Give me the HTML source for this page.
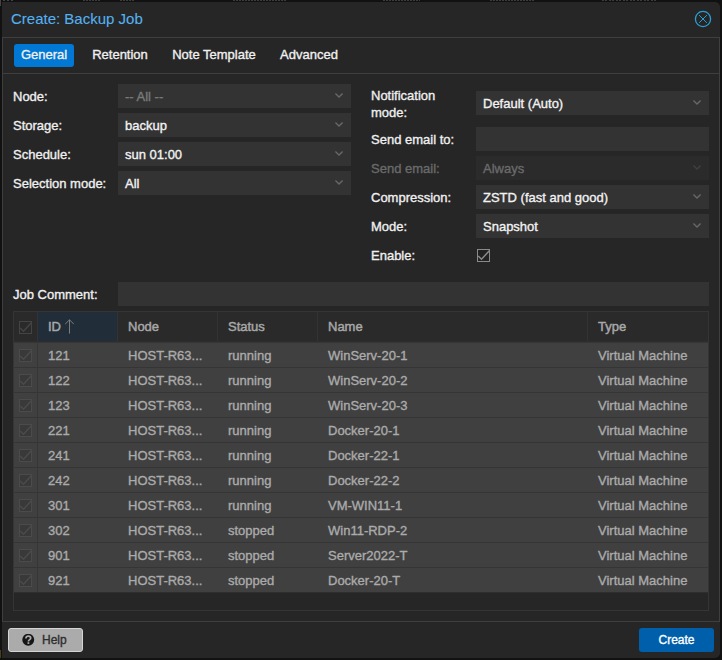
<!DOCTYPE html><html><head><meta charset="utf-8"><style>
*{box-sizing:border-box;margin:0;padding:0}
html,body{width:722px;height:660px;overflow:hidden;background:#111;font-family:"Liberation Sans",sans-serif;font-size:13px;-webkit-text-stroke:0.35px currentColor}
.a{position:absolute}
#win{position:absolute;left:2px;top:2px;width:718px;height:656px;background:#262626;border-radius:0 5px 5px 0}
.title{position:absolute;left:11px;top:10px;font-size:15px;color:#55b1f0;-webkit-text-stroke:0.1px #55b1f0;line-height:18px;white-space:nowrap}
.close{position:absolute;left:694px;top:10px}
.panel{position:absolute;left:2px;top:37px;width:718px;height:585px;border:1px solid #3f3f3f}
.tabline{position:absolute;left:2px;top:73px;width:718px;height:1px;background:#3f3f3f}
.tab{position:absolute;top:44px;height:23px;line-height:22px;color:#f0f0f0;white-space:nowrap;text-align:center}
.tab.act{background:#0078d4;border-radius:3px}
.lbl{position:absolute;color:#f0f0f0;white-space:nowrap;line-height:15px}
.lbl.dis{color:#6a6a6a}
.fld{position:absolute;height:24px;background:#333;color:#f2f2f2;line-height:24px;white-space:nowrap}
.fld span{position:absolute;left:7px;top:1px}
.fld.dis span{color:#7a7a7a}
.fld.dis2{background:#2b2b2b}
.fld.dis2 span{color:#6a6a6a}
.fld.dis2 path{stroke:#404040}
.fld .chev{position:absolute;right:7px;top:9px}
.cb{position:absolute}
.gbox{position:absolute;border:1px solid #353535;background:#262626}
.hc{position:absolute;height:29px;line-height:29px;color:#a8a8a8;white-space:nowrap;-webkit-text-stroke:0.45px #a8a8a8}
.row{position:absolute;left:14px;width:694px;height:25px;background:#404040;border-top:1px solid #353535}
.cell{position:absolute;height:24px;line-height:25px;color:#ababab;white-space:nowrap}
.btn{position:absolute;top:628px;height:24px;line-height:22px;border-radius:3px;text-align:center;white-space:nowrap;font-size:12px}
</style></head><body>
<div id="win"></div>
<div class="a" style="left:0;top:0;width:1px;height:6px;background:#444"></div>
<div class="a" style="left:0;top:650px;width:1px;height:8px;background:#4a3f1c"></div>
<div class="a" style="left:3px;top:0;width:10px;height:1px;background:repeating-linear-gradient(90deg,#444 0 2px,transparent 2px 4px)"></div>
<div class="a" style="left:83px;top:0;width:17px;height:1px;background:repeating-linear-gradient(90deg,#3c3c3c 0 2px,transparent 2px 3px)"></div>
<div class="a" style="left:120px;top:0;width:15px;height:1px;background:repeating-linear-gradient(90deg,#3c3c3c 0 2px,transparent 2px 3px)"></div>
<div class="a" style="left:233px;top:0;width:53px;height:1px;background:repeating-linear-gradient(90deg,#3c3c3c 0 2px,transparent 2px 3px)"></div>
<div class="a" style="left:383px;top:0;width:37px;height:1px;background:repeating-linear-gradient(90deg,#3c3c3c 0 2px,transparent 2px 3px)"></div>
<div class="a" style="left:490px;top:0;width:45px;height:1px;background:repeating-linear-gradient(90deg,#3c3c3c 0 2px,transparent 2px 3px)"></div>
<div class="a" style="left:602px;top:0;width:56px;height:1px;background:repeating-linear-gradient(90deg,#3c3c3c 0 2px,transparent 2px 3.5px)"></div>
<div class="title">Create: Backup Job</div>
<svg class="close" width="18" height="18" viewBox="0 0 18 18"><circle cx="9" cy="9" r="7.6" fill="none" stroke="#2a9fd6" stroke-width="1.3"/><path d="M5.1 5.1 L12.9 12.9 M12.9 5.1 L5.1 12.9" stroke="#2a9fd6" stroke-width="1"/></svg>
<div class="panel"></div>
<div class="tabline"></div>
<div class="tab act" style="left:14px;width:60px">General</div>
<div class="tab" style="left:82px;width:76px">Retention</div>
<div class="tab" style="left:164px;width:100px">Note Template</div>
<div class="tab" style="left:272px;width:74px">Advanced</div>

<div class="lbl" style="left:13px;top:89px">Node:</div>
<div class="lbl" style="left:13px;top:118px">Storage:</div>
<div class="lbl" style="left:13px;top:147px">Schedule:</div>
<div class="lbl" style="left:13px;top:176px">Selection mode:</div>
<div class="fld dis" style="left:118px;top:84px;width:233px"><span>-- All --</span><svg class="chev" width="9" height="6" viewBox="0 0 9 6"><path d="M0.4 0.5 L4 4 L7.6 0.5" fill="none" stroke="#686868" stroke-width="1.4"/></svg></div>
<div class="fld " style="left:118px;top:113px;width:233px"><span>backup</span><svg class="chev" width="9" height="6" viewBox="0 0 9 6"><path d="M0.4 0.5 L4 4 L7.6 0.5" fill="none" stroke="#686868" stroke-width="1.4"/></svg></div>
<div class="fld " style="left:118px;top:142px;width:233px"><span>sun 01:00</span><svg class="chev" width="9" height="6" viewBox="0 0 9 6"><path d="M0.4 0.5 L4 4 L7.6 0.5" fill="none" stroke="#686868" stroke-width="1.4"/></svg></div>
<div class="fld " style="left:118px;top:171px;width:233px"><span>All</span><svg class="chev" width="9" height="6" viewBox="0 0 9 6"><path d="M0.4 0.5 L4 4 L7.6 0.5" fill="none" stroke="#686868" stroke-width="1.4"/></svg></div>
<div class="lbl" style="left:371px;top:88px;line-height:16.5px">Notification<br>mode:</div>
<div class="fld " style="left:476px;top:91px;width:233px"><span>Default (Auto)</span><svg class="chev" width="9" height="6" viewBox="0 0 9 6"><path d="M0.4 0.5 L4 4 L7.6 0.5" fill="none" stroke="#686868" stroke-width="1.4"/></svg></div>
<div class="lbl" style="left:371px;top:132px">Send email to:</div>
<div class="fld " style="left:476px;top:127px;width:233px"><span></span></div>
<div class="lbl dis" style="left:371px;top:161px">Send email:</div>
<div class="fld dis dis2" style="left:476px;top:156px;width:233px"><span>Always</span><svg class="chev" width="9" height="6" viewBox="0 0 9 6"><path d="M0.4 0.5 L4 4 L7.6 0.5" fill="none" stroke="#686868" stroke-width="1.4"/></svg></div>
<div class="lbl" style="left:371px;top:190px">Compression:</div>
<div class="fld " style="left:476px;top:185px;width:233px"><span>ZSTD (fast and good)</span><svg class="chev" width="9" height="6" viewBox="0 0 9 6"><path d="M0.4 0.5 L4 4 L7.6 0.5" fill="none" stroke="#686868" stroke-width="1.4"/></svg></div>
<div class="lbl" style="left:371px;top:219px">Mode:</div>
<div class="fld " style="left:476px;top:214px;width:233px"><span>Snapshot</span><svg class="chev" width="9" height="6" viewBox="0 0 9 6"><path d="M0.4 0.5 L4 4 L7.6 0.5" fill="none" stroke="#686868" stroke-width="1.4"/></svg></div>
<div class="lbl" style="left:371px;top:248px">Enable:</div>
<svg class="cb" style="left:477px;top:249px" width="13" height="13" viewBox="0 0 13 13"><rect x="0.5" y="0.5" width="12" height="12" fill="#222" stroke="#8a8a8a" stroke-width="1"/><path d="M1.2 7 L4.5 10.2 L12.3 1.8" fill="none" stroke="#8a8a8a" stroke-width="1.5"/></svg>
<div class="lbl" style="left:13px;top:287px">Job Comment:</div>
<div class="fld " style="left:118px;top:282px;width:591px"><span></span></div>
<div class="gbox" style="left:13px;top:311px;width:696px;height:300px;"></div>
<div class="a" style="left:14px;top:312px;width:694px;height:29px;background:#2a2a2a"></div>
<div class="a" style="left:38px;top:312px;width:79px;height:29px;background:#212e39"></div>
<div class="a" style="left:37px;top:312px;width:1px;height:29px;background:#333"></div>
<div class="a" style="left:117px;top:312px;width:1px;height:29px;background:#333"></div>
<div class="a" style="left:217px;top:312px;width:1px;height:29px;background:#333"></div>
<div class="a" style="left:317px;top:312px;width:1px;height:29px;background:#333"></div>
<div class="a" style="left:587px;top:312px;width:1px;height:29px;background:#333"></div>
<div class="a" style="left:14px;top:341px;width:694px;height:1px;background:#2e2e2e"></div>
<div class="hc" style="left:48px;top:312px">ID</div>
<div class="hc" style="left:128px;top:312px">Node</div>
<div class="hc" style="left:228px;top:312px">Status</div>
<div class="hc" style="left:328px;top:312px">Name</div>
<div class="hc" style="left:598px;top:312px">Type</div>
<svg class="a" style="left:64px;top:319px" width="11" height="15" viewBox="0 0 11 15"><path d="M5.5 0.8 L5.5 14.6 M1.2 5.1 L5.5 0.8 L9.8 5.1" fill="none" stroke="#7d7d7d" stroke-width="1"/></svg>
<svg class="cb" style="left:19px;top:321px" width="13" height="13" viewBox="0 0 13 13"><rect x="0.5" y="0.5" width="12" height="12" fill="#2a2a2a" stroke="#444" stroke-width="1"/><path d="M1.2 7 L4.5 10.2 L12.3 1.8" fill="none" stroke="#444" stroke-width="1.5"/></svg>
<div class="row" style="top:342px"></div>
<svg class="cb" style="left:19px;top:349px" width="13" height="13" viewBox="0 0 13 13"><rect x="0.5" y="0.5" width="12" height="12" fill="#393939" stroke="#4b4b4b" stroke-width="1"/><path d="M1.2 7 L4.5 10.2 L12.3 1.8" fill="none" stroke="#4b4b4b" stroke-width="1.5"/></svg>
<div class="cell" style="left:48px;top:343px">121</div>
<div class="cell" style="left:128px;top:343px">HOST-R63...</div>
<div class="cell" style="left:228px;top:343px">running</div>
<div class="cell" style="left:328px;top:343px">WinServ-20-1</div>
<div class="cell" style="left:598px;top:343px">Virtual Machine</div>
<div class="row" style="top:367px"></div>
<svg class="cb" style="left:19px;top:374px" width="13" height="13" viewBox="0 0 13 13"><rect x="0.5" y="0.5" width="12" height="12" fill="#393939" stroke="#4b4b4b" stroke-width="1"/><path d="M1.2 7 L4.5 10.2 L12.3 1.8" fill="none" stroke="#4b4b4b" stroke-width="1.5"/></svg>
<div class="cell" style="left:48px;top:368px">122</div>
<div class="cell" style="left:128px;top:368px">HOST-R63...</div>
<div class="cell" style="left:228px;top:368px">running</div>
<div class="cell" style="left:328px;top:368px">WinServ-20-2</div>
<div class="cell" style="left:598px;top:368px">Virtual Machine</div>
<div class="row" style="top:392px"></div>
<svg class="cb" style="left:19px;top:399px" width="13" height="13" viewBox="0 0 13 13"><rect x="0.5" y="0.5" width="12" height="12" fill="#393939" stroke="#4b4b4b" stroke-width="1"/><path d="M1.2 7 L4.5 10.2 L12.3 1.8" fill="none" stroke="#4b4b4b" stroke-width="1.5"/></svg>
<div class="cell" style="left:48px;top:393px">123</div>
<div class="cell" style="left:128px;top:393px">HOST-R63...</div>
<div class="cell" style="left:228px;top:393px">running</div>
<div class="cell" style="left:328px;top:393px">WinServ-20-3</div>
<div class="cell" style="left:598px;top:393px">Virtual Machine</div>
<div class="row" style="top:417px"></div>
<svg class="cb" style="left:19px;top:424px" width="13" height="13" viewBox="0 0 13 13"><rect x="0.5" y="0.5" width="12" height="12" fill="#393939" stroke="#4b4b4b" stroke-width="1"/><path d="M1.2 7 L4.5 10.2 L12.3 1.8" fill="none" stroke="#4b4b4b" stroke-width="1.5"/></svg>
<div class="cell" style="left:48px;top:418px">221</div>
<div class="cell" style="left:128px;top:418px">HOST-R63...</div>
<div class="cell" style="left:228px;top:418px">running</div>
<div class="cell" style="left:328px;top:418px">Docker-20-1</div>
<div class="cell" style="left:598px;top:418px">Virtual Machine</div>
<div class="row" style="top:442px"></div>
<svg class="cb" style="left:19px;top:449px" width="13" height="13" viewBox="0 0 13 13"><rect x="0.5" y="0.5" width="12" height="12" fill="#393939" stroke="#4b4b4b" stroke-width="1"/><path d="M1.2 7 L4.5 10.2 L12.3 1.8" fill="none" stroke="#4b4b4b" stroke-width="1.5"/></svg>
<div class="cell" style="left:48px;top:443px">241</div>
<div class="cell" style="left:128px;top:443px">HOST-R63...</div>
<div class="cell" style="left:228px;top:443px">running</div>
<div class="cell" style="left:328px;top:443px">Docker-22-1</div>
<div class="cell" style="left:598px;top:443px">Virtual Machine</div>
<div class="row" style="top:467px"></div>
<svg class="cb" style="left:19px;top:474px" width="13" height="13" viewBox="0 0 13 13"><rect x="0.5" y="0.5" width="12" height="12" fill="#393939" stroke="#4b4b4b" stroke-width="1"/><path d="M1.2 7 L4.5 10.2 L12.3 1.8" fill="none" stroke="#4b4b4b" stroke-width="1.5"/></svg>
<div class="cell" style="left:48px;top:468px">242</div>
<div class="cell" style="left:128px;top:468px">HOST-R63...</div>
<div class="cell" style="left:228px;top:468px">running</div>
<div class="cell" style="left:328px;top:468px">Docker-22-2</div>
<div class="cell" style="left:598px;top:468px">Virtual Machine</div>
<div class="row" style="top:492px"></div>
<svg class="cb" style="left:19px;top:499px" width="13" height="13" viewBox="0 0 13 13"><rect x="0.5" y="0.5" width="12" height="12" fill="#393939" stroke="#4b4b4b" stroke-width="1"/><path d="M1.2 7 L4.5 10.2 L12.3 1.8" fill="none" stroke="#4b4b4b" stroke-width="1.5"/></svg>
<div class="cell" style="left:48px;top:493px">301</div>
<div class="cell" style="left:128px;top:493px">HOST-R63...</div>
<div class="cell" style="left:228px;top:493px">running</div>
<div class="cell" style="left:328px;top:493px">VM-WIN11-1</div>
<div class="cell" style="left:598px;top:493px">Virtual Machine</div>
<div class="row" style="top:517px"></div>
<svg class="cb" style="left:19px;top:524px" width="13" height="13" viewBox="0 0 13 13"><rect x="0.5" y="0.5" width="12" height="12" fill="#393939" stroke="#4b4b4b" stroke-width="1"/><path d="M1.2 7 L4.5 10.2 L12.3 1.8" fill="none" stroke="#4b4b4b" stroke-width="1.5"/></svg>
<div class="cell" style="left:48px;top:518px">302</div>
<div class="cell" style="left:128px;top:518px">HOST-R63...</div>
<div class="cell" style="left:228px;top:518px">stopped</div>
<div class="cell" style="left:328px;top:518px">Win11-RDP-2</div>
<div class="cell" style="left:598px;top:518px">Virtual Machine</div>
<div class="row" style="top:542px"></div>
<svg class="cb" style="left:19px;top:549px" width="13" height="13" viewBox="0 0 13 13"><rect x="0.5" y="0.5" width="12" height="12" fill="#393939" stroke="#4b4b4b" stroke-width="1"/><path d="M1.2 7 L4.5 10.2 L12.3 1.8" fill="none" stroke="#4b4b4b" stroke-width="1.5"/></svg>
<div class="cell" style="left:48px;top:543px">901</div>
<div class="cell" style="left:128px;top:543px">HOST-R63...</div>
<div class="cell" style="left:228px;top:543px">stopped</div>
<div class="cell" style="left:328px;top:543px">Server2022-T</div>
<div class="cell" style="left:598px;top:543px">Virtual Machine</div>
<div class="row" style="top:567px"></div>
<svg class="cb" style="left:19px;top:574px" width="13" height="13" viewBox="0 0 13 13"><rect x="0.5" y="0.5" width="12" height="12" fill="#393939" stroke="#4b4b4b" stroke-width="1"/><path d="M1.2 7 L4.5 10.2 L12.3 1.8" fill="none" stroke="#4b4b4b" stroke-width="1.5"/></svg>
<div class="cell" style="left:48px;top:568px">921</div>
<div class="cell" style="left:128px;top:568px">HOST-R63...</div>
<div class="cell" style="left:228px;top:568px">stopped</div>
<div class="cell" style="left:328px;top:568px">Docker-20-T</div>
<div class="cell" style="left:598px;top:568px">Virtual Machine</div>
<div class="a" style="left:14px;top:592px;width:694px;height:1px;background:#2e2e2e"></div>
<div class="a" style="left:37px;top:342px;width:1px;height:250px;background:#363636"></div>
<div class="btn" style="left:8px;width:75px;background:#ababab;border:1px solid #d4d4d4;color:#2e2e2e"><span class="a" style="left:33px;top:0">Help</span></div>
<svg class="a" style="left:22px;top:634px" width="13" height="13" viewBox="0 0 13 13"><circle cx="6.25" cy="5.75" r="5.95" fill="#161616"/><path d="M3.9 4.4 C3.9 2.9 5 2.2 6.3 2.2 C7.6 2.2 8.7 3 8.7 4.2 C8.7 5.6 6.4 5.7 6.4 7.4" fill="none" stroke="#ababab" stroke-width="1.7"/><rect x="5.5" y="8.2" width="1.8" height="1.7" fill="#ababab"/></svg>
<div class="btn" style="left:639px;width:75px;background:#005fab;color:#fff;line-height:24px">Create</div>
</body></html>
